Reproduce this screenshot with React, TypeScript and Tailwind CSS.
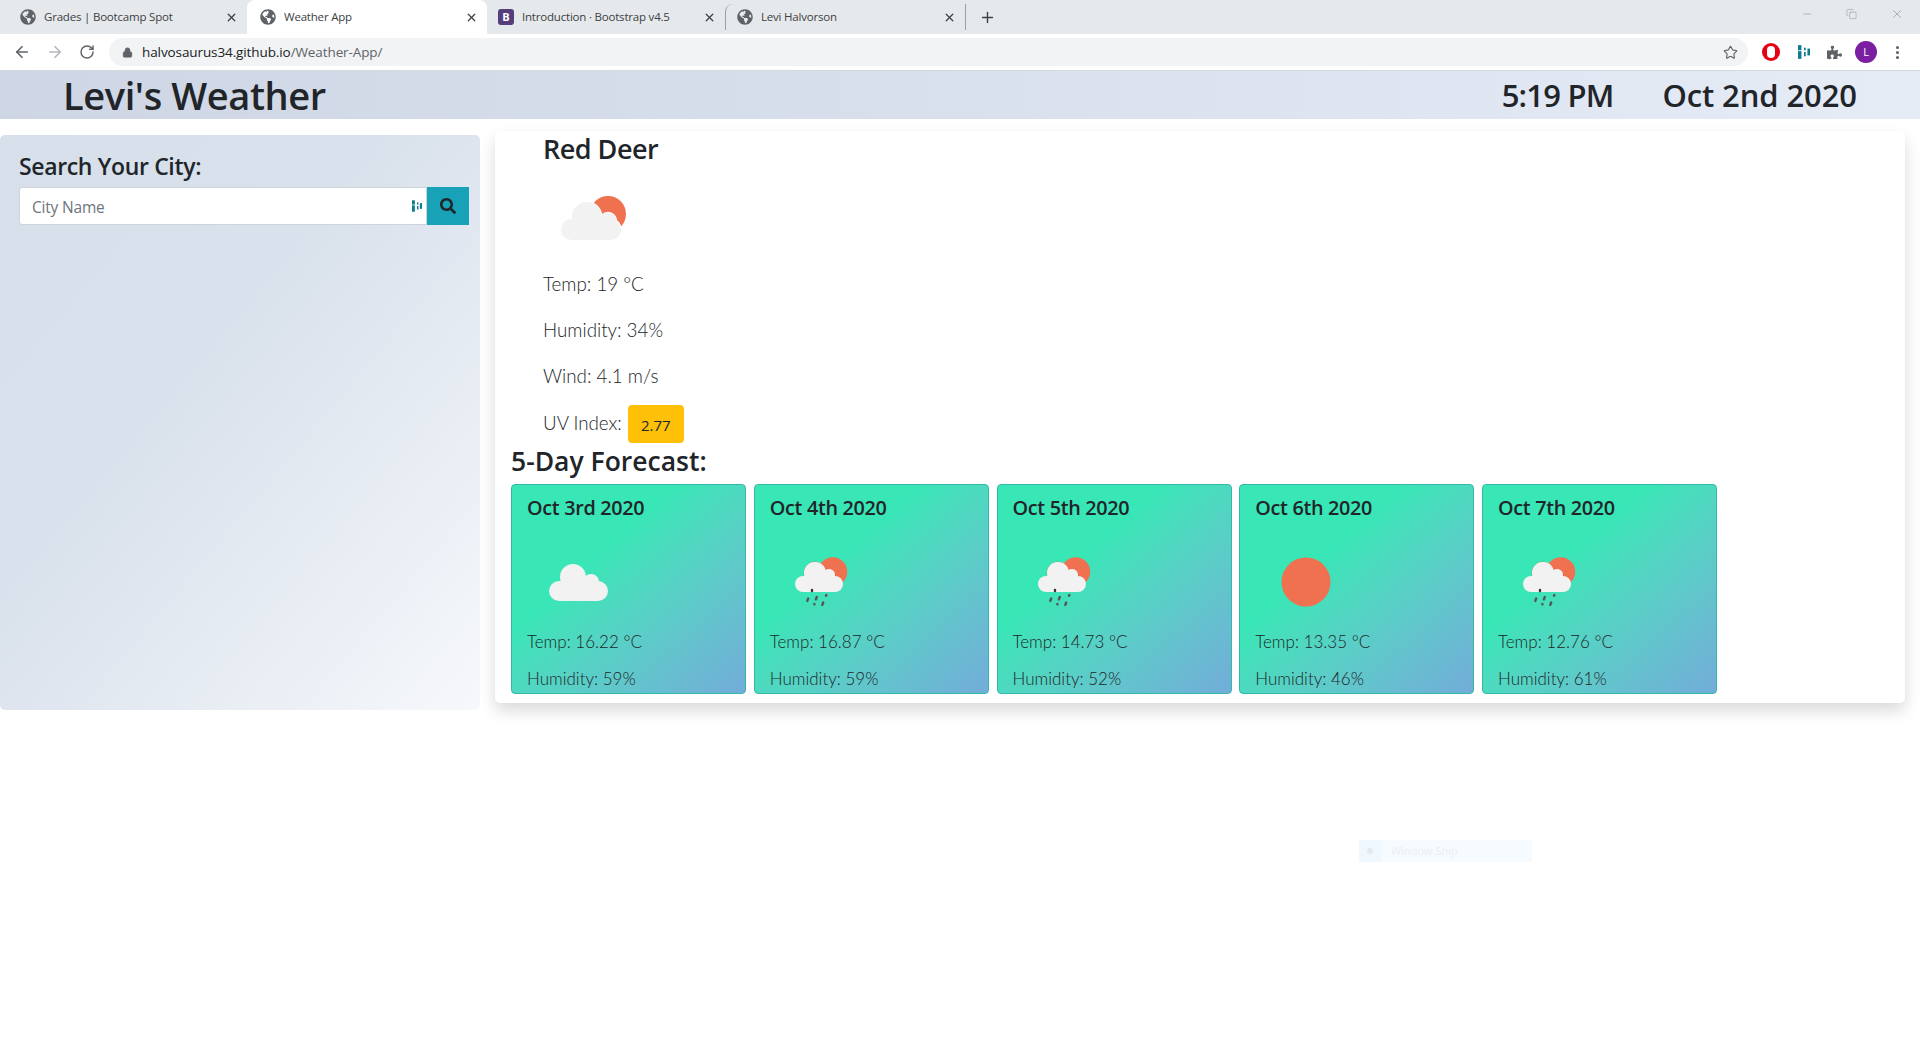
import {
  ArrowLeft,
  ArrowRight,
  Copy,
  Lock,
  Minus,
  MoreVertical,
  Plus,
  RotateCw,
  Star,
  X,
} from "lucide-react";
import { FaGlobeAmericas, FaPuzzlePiece, FaSearch } from "react-icons/fa";

const font = "font-['Open_Sans',sans-serif]";
const light = "font-['Lato',sans-serif] font-light";

const tabs = [
  { title: "Grades | Bootcamp Spot", w: "w-[240px] pl-[13px]" },
  { title: "Weather App", w: "w-[240px] pl-[13px]", active: true },
  { title: "Introduction · Bootstrap v4.5", w: "w-[238px] pl-[11px]", boot: true },
  { title: "Levi Halvorson", w: "w-[240px] pl-[11px]", divider: true },
];

const forecast = [
  { date: "Oct 3rd 2020", icon: "cloud", temp: "16.22", hum: "59" },
  { date: "Oct 4th 2020", icon: "rain", temp: "16.87", hum: "59" },
  { date: "Oct 5th 2020", icon: "rain", temp: "14.73", hum: "52" },
  { date: "Oct 6th 2020", icon: "sun", temp: "13.35", hum: "46" },
  { date: "Oct 7th 2020", icon: "rain", temp: "12.76", hum: "61" },
];

const Cloud = () => (
  <svg viewBox="0 0 100 100" className="w-[100px] h-[100px]">
    <g fill="#f2f2f2">
      <rect x="22" y="49" width="59" height="20" rx="10" />
      <circle cx="46" cy="45" r="13" />
      <circle cx="64" cy="50" r="8" />
    </g>
  </svg>
);

const Sun = () => (
  <svg viewBox="0 0 100 100" className="w-[100px] h-[100px]">
    <circle cx="51" cy="50" r="24.5" fill="#ef7150" />
  </svg>
);

const RainSun = () => (
  <svg viewBox="0 0 100 100" className="w-[100px] h-[100px]">
    <circle cx="62.7" cy="39.7" r="14.5" fill="#ef7150" />
    <g fill="#f2f2f2" stroke="#e8593c" strokeWidth="0.5">
      <circle cx="59" cy="43" r="6" />
      <circle cx="45" cy="41" r="11" />
    </g>
    <rect x="25" y="44" width="48" height="16" rx="8" fill="#f2f2f2" />
    <circle cx="45" cy="41" r="11" fill="#f2f2f2" />
    <circle cx="59" cy="43" r="6" fill="#f2f2f2" />
    <g stroke="#555" strokeWidth="2.4" strokeLinecap="round">
      <path d="M42 58v1" stroke="#333" />
      <path d="M38.2 66.5l-.9 2.4" />
      <path d="M46.8 65l-.9 2.4" />
      <path d="M44.4 72v.2" />
      <path d="M56.4 63l-.4 .8" />
      <path d="M53.2 70.5l-.9 2.4" />
    </g>
  </svg>
);

const CloudSun = () => (
  <svg viewBox="0 0 100 100" className="w-[100px] h-[100px]">
    <circle cx="65" cy="49" r="18" fill="#ef7150" />
    <g fill="#f2f2f2" stroke="#fff" strokeWidth="1.5">
      <circle cx="43.7" cy="52" r="15" />
      <circle cx="65" cy="56" r="8.5" />
      <rect x="18" y="54" width="60" height="21" rx="10.5" />
    </g>
    <g fill="#f2f2f2">
      <circle cx="43.7" cy="52" r="15" />
      <circle cx="65" cy="56" r="8.5" />
      <rect x="18" y="54" width="60" height="21" rx="10.5" />
    </g>
  </svg>
);

const Dash = ({ className }: { className: string }) => (
  <svg viewBox="0 0 14 16" className={className} fill="#0e7c8c">
    <rect x="0" y="0" width="4" height="6" />
    <rect x="0" y="7" width="4" height="9" />
    <rect x="7" y="3" width="2" height="3" />
    <rect x="7" y="8" width="2" height="5" />
    <rect x="11" y="4" width="3" height="8" />
  </svg>
);

function Browser() {
  return (
    <div className={`${font} text-[11.5px] text-[#3c4043]`}>
      <div className="h-[34px] bg-[#e6e9ec] flex items-stretch pl-[7px]">
        {tabs.map((t) => (
          <div
            key={t.title}
            className={`${t.w} flex items-center pr-[9px] gap-2 rounded-t-lg ${
              t.active ? "bg-white" : ""
            } ${t.divider ? "border-l border-[#9aa0a6] self-center h-[26px]" : ""}`}
          >
            {t.boot ? (
              <div className="w-4 h-4 rounded-[3px] bg-[#563d7c] text-white text-[11px] font-bold flex items-center justify-center shrink-0">
                B
              </div>
            ) : (
              <FaGlobeAmericas className="w-4 h-4 text-[#5f6368] shrink-0" />
            )}
            <span className="flex-1 truncate tracking-[-0.2px]">{t.title}</span>
            <X className="w-[13px] h-[13px] text-[#3c4043]" strokeWidth={2.4} />
          </div>
        ))}
        <div className="self-center h-[26px] border-l border-[#9aa0a6] pl-[13px] flex items-center">
          <Plus className="w-[17px] h-[17px] text-[#3c4043]" strokeWidth={2} />
        </div>
        <div className="ml-auto flex items-start pt-[7px] pr-[16px] gap-[33px] text-[#80868b]">
          <Minus className="w-[12px] h-[14px]" strokeWidth={1} />
          <Copy className="w-[11px] h-[12px] mt-px" strokeWidth={1} />
          <X className="w-[14px] h-[14px]" strokeWidth={1} />
        </div>
      </div>
      <div className="h-[36px] bg-white flex items-center pl-[13px]">
        <ArrowLeft className="w-[18px] h-[18px] text-[#5f6368] mr-[15px]" strokeWidth={2.2} />
        <ArrowRight className="w-[18px] h-[18px] text-[#b4b7bb] mr-[15px]" strokeWidth={2.2} />
        <RotateCw className="w-[16px] h-[16px] text-[#5f6368] mr-[14px]" strokeWidth={2.2} />
        <div className="w-[1639px] h-[28px] rounded-full bg-[#f1f3f4] flex items-center pl-[13px] pr-[10px]">
          <Lock className="w-[11px] h-[11px] text-[#5f6368] fill-[#5f6368] mr-[9px]" />
          <span className="text-[13.5px] text-[#202124] tracking-[-0.1px]">
            halvosaurus34.github.io<span className="text-[#5f6368]">/Weather-App/</span>
          </span>
          <Star className="w-[15px] h-[15px] ml-auto text-[#5f6368]" strokeWidth={1.8} />
        </div>
        <div className="ml-[14px] w-[18px] h-[18px] rounded-full bg-[#e60012] flex items-center justify-center">
          <div className="w-[8px] h-[12px] rounded-full bg-white" />
        </div>
        <Dash className="w-[12px] h-[16px] ml-[18px]" />
        <FaPuzzlePiece className="w-[15px] h-[15px] ml-[17px] text-[#5f6368]" />
        <div className="w-[22px] h-[22px] ml-[13px] rounded-full bg-[#7b1fa2] text-white text-[11px] flex items-center justify-center">
          L
        </div>
        <MoreVertical className="w-[17px] h-[17px] ml-[12px] text-[#5f6368]" strokeWidth={2.4} />
      </div>
    </div>
  );
}

export default function App() {
  return (
    <div className={`${font} relative min-h-[1040px] bg-white text-[#212529]`}>
      <Browser />

      {/* Header */}
      <div className="h-[49px] flex items-center justify-between pl-[63px] pr-[63px] border-t border-[#d5d8dd] bg-linear-to-r from-[#ced5e4] to-[#e5ecf6]">
        <h1 className="text-[38px] leading-[49px] font-semibold tracking-[-0.4px] pt-px">Levi's Weather</h1>
        <div className="flex gap-[49px] text-[31px] leading-[49px] font-semibold">
          <span className="tracking-[-0.8px]">5:19 PM</span>
          <span className="tracking-[-0.1px]">Oct 2nd 2020</span>
        </div>
      </div>

      <div className="flex items-start pr-[15px]">
        {/* Sidebar */}
        <div className="w-[480px] h-[575px] mt-4 rounded-[5px] bg-linear-to-br from-[#d6dfea] via-[#d9e1ec] via-[40%] to-[#f6f8fb] pl-[19px] pr-[11px] pt-[15px]">
          <h2 className="text-[23px] leading-[32px] font-semibold tracking-[-0.35px]">Search Your City:</h2>
          <div className="flex h-[38px] mt-[5px]">
            <div className="flex-1 bg-white border border-[#ced4da] rounded-l-[3px] flex items-center pl-3 pr-[4px]">
              <span className="text-[15.5px] text-[#6c757d] tracking-[-0.2px] pt-[3px]">City Name</span>
              <Dash className="w-[10px] h-[16px] ml-auto" />
            </div>
            <div className="w-[42px] bg-[#17a2b8] flex items-center justify-center">
              <FaSearch className="w-[16px] h-[16px] text-[#212529]" />
            </div>
          </div>
        </div>

        {/* Current weather + forecast */}
        <div className="flex-1 h-[572px] ml-[15px] mt-3 bg-white rounded-[5px] shadow-[0_8px_16px_rgba(0,0,0,0.15)]">
          <div className="pl-[48px]">
            <h2 className="text-[27px] leading-[36px] font-semibold tracking-[-0.5px]">Red Deer</h2>
            <div className="h-[100px] mt-[-2px]">
              <CloudSun />
            </div>
            <div className={`${light} text-[18.8px] leading-[24px] pt-[7px]`}>
              <p className="mb-[22px]">Temp: 19 °C</p>
              <p className="mb-[22px]">Humidity: 34%</p>
              <p className="mb-[17px]">Wind: 4.1 m/s</p>
              <p className="flex items-center gap-[6px] h-[38px]">
                <span className="-mt-[3px]">UV Index:</span>
                <span className={`${font} w-[56px] h-[38px] rounded-[4px] bg-[#ffc107] text-[15px] font-normal flex items-center justify-center pt-[2px]`}>
                  2.77
                </span>
              </p>
            </div>
          </div>
          <div className="pl-[16px]">
            <h3 className="text-[26.5px] leading-[32px] mt-[2px] font-semibold">5-Day Forecast:</h3>
            <div className="flex gap-[7.75px] mt-[7px]">
              {forecast.map((d) => (
                <div
                  key={d.date}
                  className="w-[235px] h-[210px] rounded-[4px] border border-[#34b9a8] bg-linear-to-br from-[#38e6b6] from-[35%] to-[#72acd9] pl-[15px] pt-[11px]"
                >
                  <h4 className="text-[19.8px] leading-[24px] font-semibold tracking-[-0.3px]">{d.date}</h4>
                  <div className="h-[98px] mt-[12px]">
                    {d.icon === "cloud" && <Cloud />}
                    {d.icon === "rain" && <RainSun />}
                    {d.icon === "sun" && <Sun />}
                  </div>
                  <div className={`${light} text-[17px] leading-[24px]`}>
                    <p>Temp: {d.temp} °C</p>
                    <p className="mt-[13px]">Humidity: {d.hum}%</p>
                  </div>
                </div>
              ))}
            </div>
          </div>
        </div>
      </div>

      {/* faded snip hint left in the capture */}
      <div className="absolute left-[1359px] top-[840px] w-[173px] h-[22px] bg-[#f6fbff] flex items-center text-[11px] text-[#eceef0]">
        <div className="w-[22px] h-full bg-[#eff7ff] flex items-center justify-center mr-[10px]">
          <div className="w-[6px] h-[6px] rounded-full bg-[#e6e9ec]" />
        </div>
        Window Snip
      </div>
    </div>
  );
}
